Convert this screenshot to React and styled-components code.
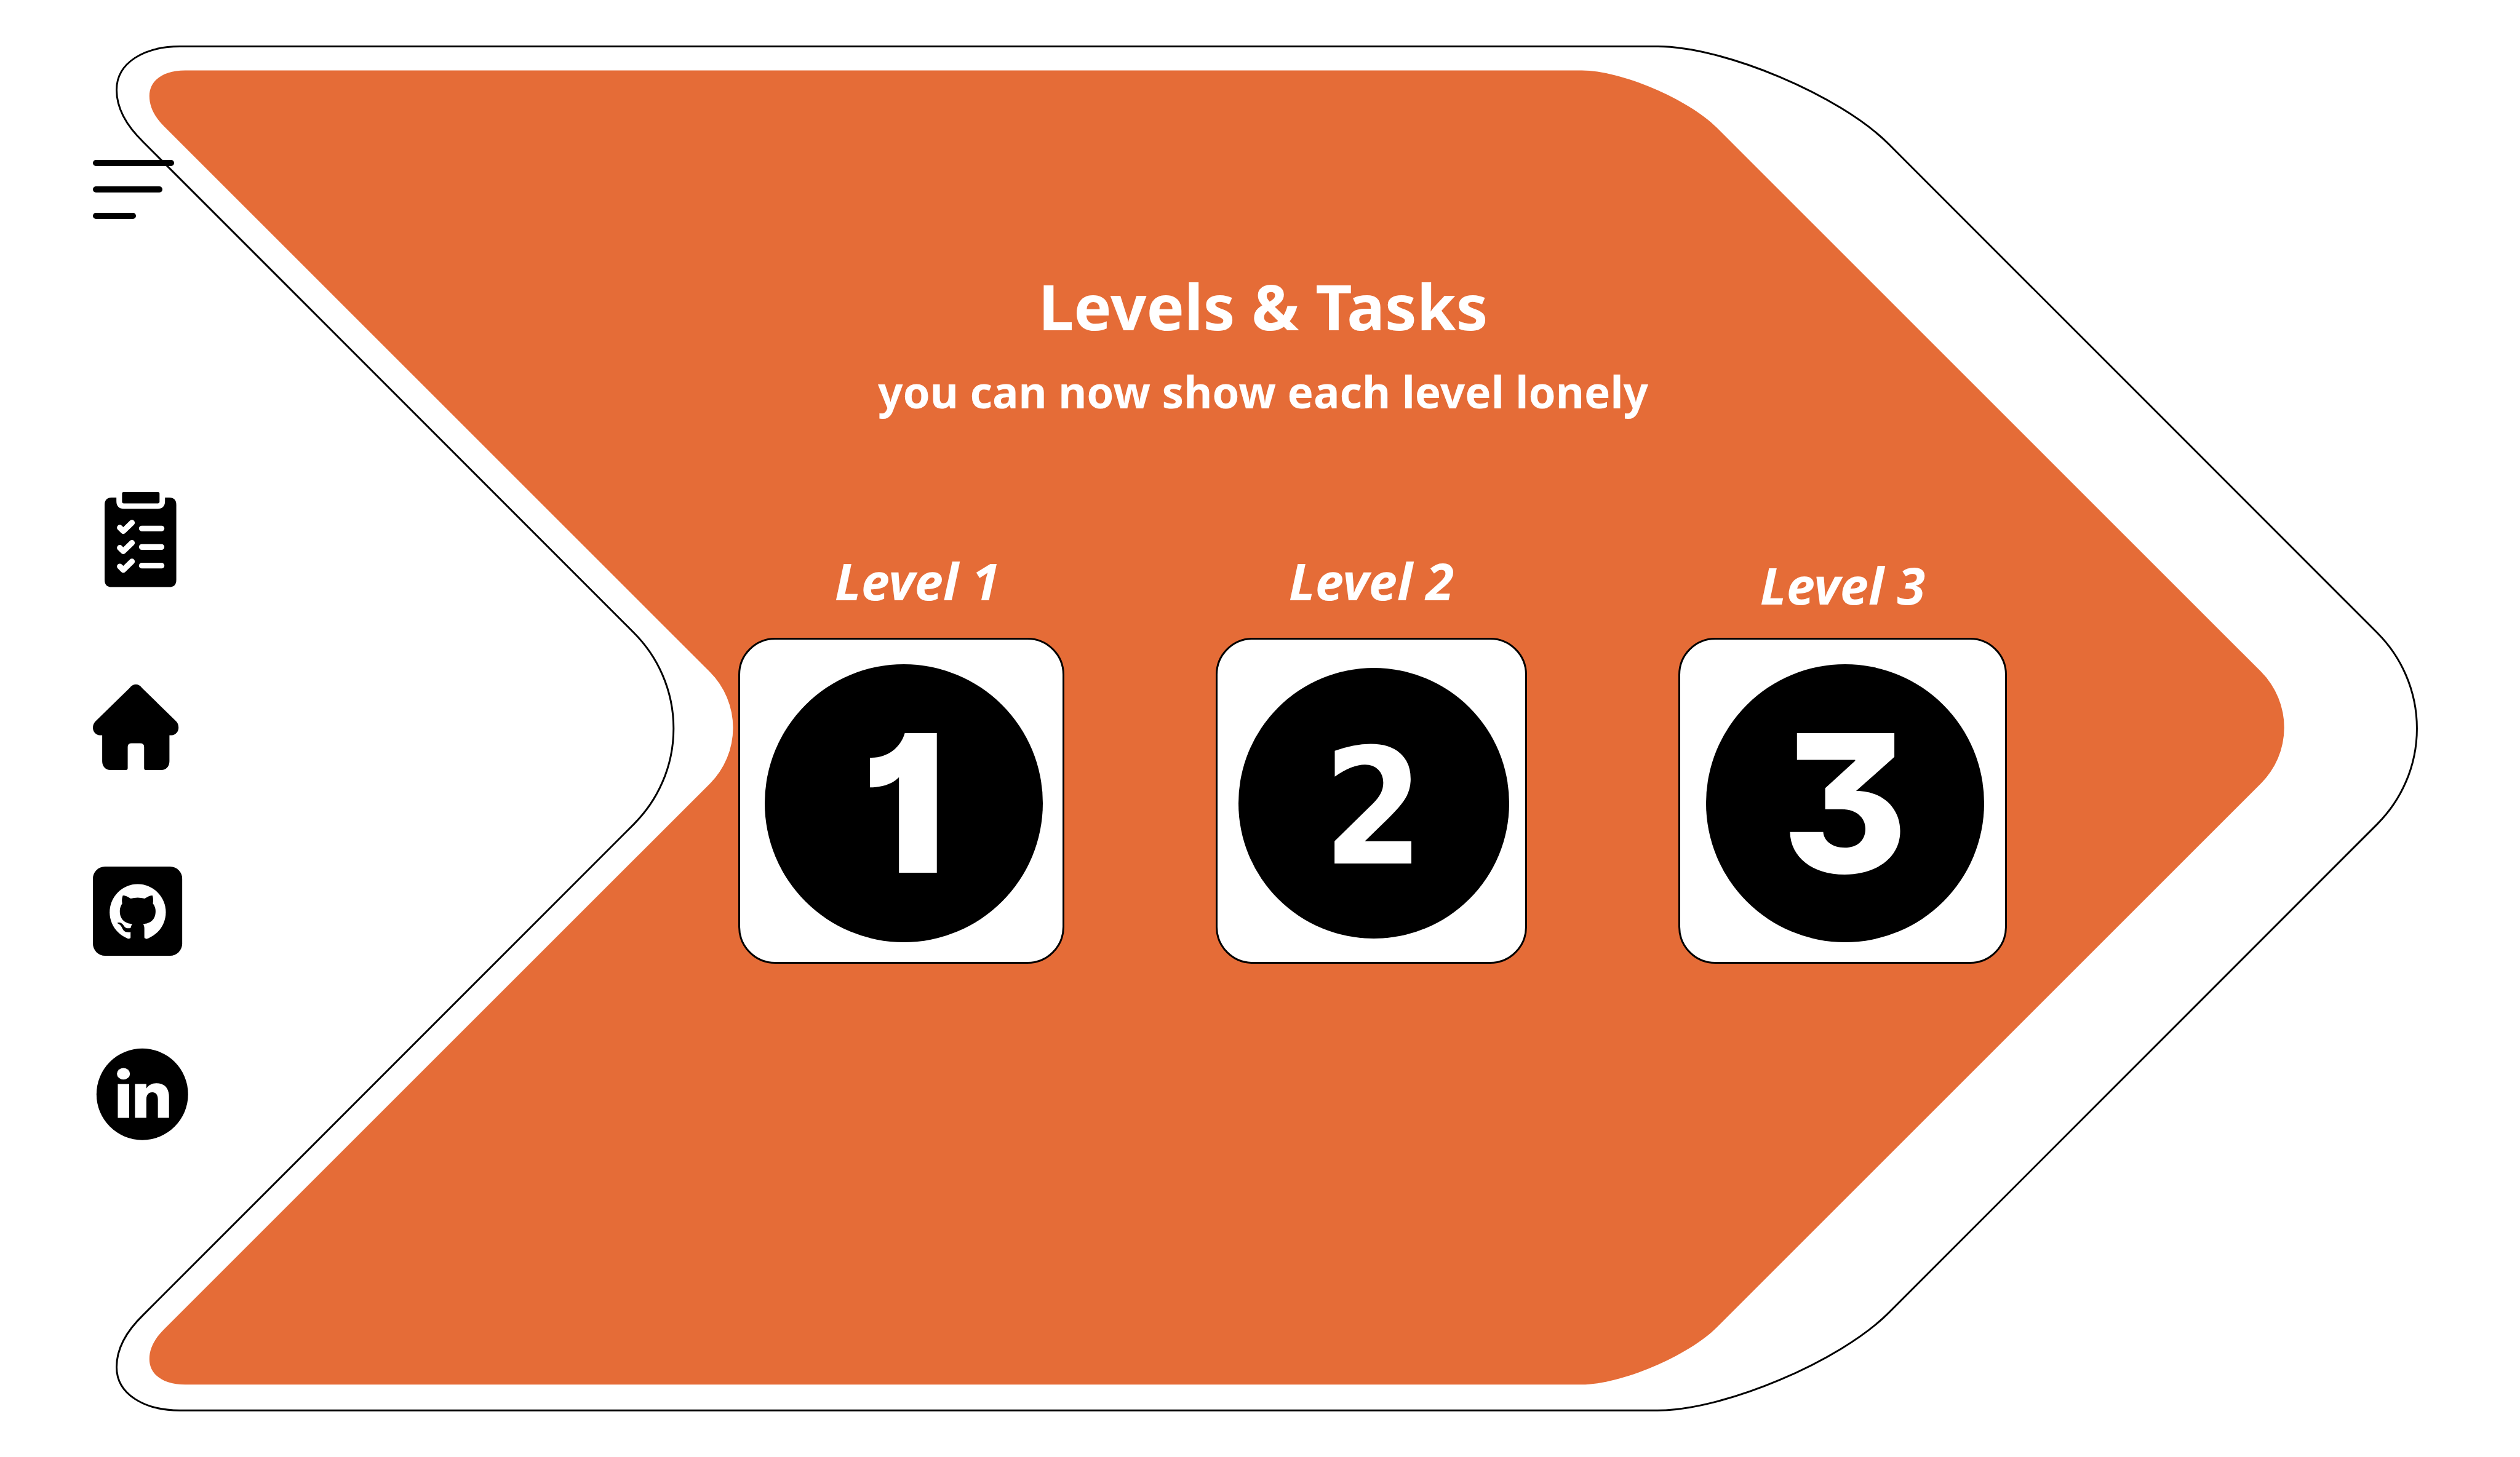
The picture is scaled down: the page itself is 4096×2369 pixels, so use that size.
import React from "react";
import styled, { createGlobalStyle } from "styled-components";

const GlobalStyle = createGlobalStyle`
  *, *::before, *::after { box-sizing: border-box; }
  body {
    margin: 0;
    background: #fff;
    color: #000;
    font-family: "Segoe UI", "Noto Sans", "Open Sans", sans-serif;
  }
`;

const Page = styled.div`
  display: grid;
  grid-template-columns: 100%;
`;

const Backdrop = styled.svg`
  grid-area: 1 / 1;
  display: block;
  width: 100%;
  height: auto;
`;

const Layout = styled.div`
  grid-area: 1 / 1;
  display: grid;
  grid-template-columns: 308px 1fr 298px;
  align-items: start;
`;

const Sidebar = styled.aside`
  display: flex;
  flex-direction: column;
  align-items: flex-start;
  gap: 444px;
  padding: 260px 0 0 151px;
`;

const MenuButton = styled.button`
  display: flex;
  flex-direction: column;
  align-items: flex-start;
  gap: 33px;
  padding: 0;
  border: 0;
  background: none;
  cursor: pointer;
`;

const MenuBar = styled.span`
  width: ${({ $width }) => $width}px;
  height: 10px;
  border-radius: 5px;
  background: #000;
`;

const Nav = styled.nav`
  display: flex;
  flex-direction: column;
  gap: 144px;
`;

const NavLink = styled.a`
  display: block;
  color: #000;
`;

const NavIcon = styled.svg`
  display: block;
  width: 156px;
  height: 156px;
`;

const Main = styled.main`
  display: flex;
  flex-direction: column;
  align-items: center;
  padding-top: 425px;
  color: #fff;
`;

const Title = styled.h1`
  margin: 0;
  font-size: 103px;
  line-height: 144px;
  font-weight: 700;
`;

const Subtitle = styled.p`
  margin: 0;
  font-size: 71px;
  line-height: 136px;
  font-weight: 700;
`;

const Levels = styled.div`
  display: flex;
  align-items: flex-end;
  gap: 246px;
  margin: 185px 0 0 356px;
`;

const Level = styled.section`
  display: flex;
  flex-direction: column;
  align-items: center;
`;

const LevelName = styled.h2`
  margin: 0;
  padding: 0 0 ${({ $gap }) => $gap}px ${({ $indent }) => $indent}px;
  font-size: 83px;
  line-height: 108px;
  font-weight: 700;
  font-style: italic;
`;

const LevelCard = styled.button`
  display: flex;
  align-items: center;
  justify-content: center;
  width: ${({ $width }) => $width}px;
  height: 530px;
  padding: 7px 0 0 7px;
  border: 3px solid #000;
  border-radius: 60px;
  background: #fff;
  cursor: pointer;
`;

const Disc = styled.span`
  display: flex;
  align-items: center;
  justify-content: center;
  width: ${({ $size }) => $size}px;
  height: ${({ $size }) => $size}px;
  padding-top: ${({ $drop }) => $drop}px;
  border-radius: 50%;
  background: #000;
  color: #fff;
  font-family: ${({ $font }) => $font}, sans-serif;
  font-size: ${({ $digit }) => $digit}px;
  line-height: 1;
  font-weight: ${({ $weight }) => $weight};
  font-feature-settings: "cv01", "cv09";
`;

function Arrow() {
  return (
    <Backdrop viewBox="0 0 4150 2400" aria-hidden="true">
      <path
        fill="none"
        stroke="#000"
        strokeWidth="3"
        d="M296 76.5H2730C2839 76.5 3030 157 3110 237L3915 1042.5A222.7 222.7 0 0 1 3915 1357.5L3110 2163C3030 2243 2839 2323.5 2730 2323.5H296C238 2323.5 192 2297 192 2252C192 2224 206 2195 236 2166L1044 1357.5A222.7 222.7 0 0 0 1044 1042.5L236 234C206 205 192 176 192 148C192 103 238 76.5 296 76.5Z"
      />
      <path
        fill="#e56c37"
        d="M305 116H2605C2669 116 2780 163 2827 210L3724 1107A130 130 0 0 1 3723 1291L2827 2187C2780 2234 2669 2281 2605 2281H305C268 2281 246 2264 246 2239C246 2222 254 2206 270 2190L1169 1291A130 130 0 0 0 1169 1107L270 208C254 192 246 175 246 158C246 133 268 116 305 116Z"
      />
    </Backdrop>
  );
}

function TasksIcon() {
  return (
    <NavIcon viewBox="0 0 158 158" aria-hidden="true">
      <path d="M31 9H38.7V15Q38.7 27.6 51 27.6H106.5Q118.7 27.6 118.7 15V9H125.5Q137.3 9 137.3 21V144.6Q137.3 156.6 125.5 156.6H31Q19.3 156.6 19.3 144.6V21Q19.3 9 31 9Z" />
      <rect x="48" y="0" width="61.7" height="18.7" rx="2.5" />
      <g fill="none" stroke="#fff" strokeWidth="9.4" strokeLinecap="round" strokeLinejoin="round">
        <path d="M44.3 58.7L50 64.3L64.3 50.5M80.5 60.1H113" />
        <path d="M44.3 91.9L50 97.5L64.3 83.7M80.5 90.5H113" />
        <path d="M44.3 122.6L50 128.2L64.3 114.4M80.5 121.2H113" />
      </g>
    </NavIcon>
  );
}

function HomeIcon() {
  return (
    <NavIcon viewBox="0 0 158 158" aria-hidden="true">
      <path d="M11.3 96.8C4.5 96.3 0 90.5 0 84.3C0 80 1.5 76.5 4.3 73.6L60.3 18.9C66.5 11 75 11 81 18.9L137 73.6C139.8 76.5 141 80 141 84.3C141 90.5 136.5 96.3 129.7 96.8H126V139.6C126 148 120.5 154 112.7 154H87Q84.3 154 84.3 151V116Q84.3 110 77.7 110H63.7Q57.3 110 57.3 116V151Q57.3 154 54.3 154H28.7C21 154 15.3 148 15.3 139.6V96.8Z" />
    </NavIcon>
  );
}

function GithubIcon() {
  return (
    <NavIcon viewBox="0 0 158 158" aria-hidden="true">
      <rect x="0" y="9" width="147" height="147" rx="20" />
      <circle cx="73.8" cy="84.3" r="46.2" fill="#fff" />
      <path d="M49.3 56.7C52.5 56.6 57.5 58.5 62.3 61.9Q73.7 58.8 85.3 61.9C90 58.5 95 56.6 98 56.7C99.5 61 99.5 66 98.7 69.9C101.8 73.5 103.2 78 103.2 82.4C103.2 97.5 94 102.8 82.7 103.9C84 106 84.7 108 84.7 111V125C84.7 127.5 86 127.7 87.7 127.5V134H59V127.5C61 127.8 62 127.3 62 125.5V117.1C52 118.2 50 114.5 48 110C46.7 106.8 44.5 104.2 41.5 103C39.3 102.2 39.8 101.2 43.7 101.2C47 101.6 49 103.5 51 106.5C53.5 111 58.5 111.5 62.3 109.8Q62.8 106 65 103.9C54 102.8 44.3 97.5 44.3 82.4C44.3 78 45.8 73.5 48.3 69.9C47.3 66 47.8 60.5 49.3 56.7Z" />
    </NavIcon>
  );
}

function LinkedinIcon() {
  return (
    <NavIcon viewBox="0 0 158 158" aria-hidden="true">
      <circle cx="81.3" cy="80.2" r="75.4" />
      <g fill="#fff">
        <ellipse cx="50.3" cy="46.5" rx="10.7" ry="9.5" />
        <rect x="41" y="63.4" width="18.7" height="55.7" />
        <path d="M69.3 63.4H88V70.6C92 65 97.5 62 104.3 62C118 62 125.3 70 125.3 84.5V119.1H107V89C107 81.5 104 77 97.7 77C91.5 77 88 81.5 88 88V119.1H69.3Z" />
      </g>
    </NavIcon>
  );
}

const links = [
  { label: "Tasks", href: "#tasks", Icon: TasksIcon },
  { label: "Home", href: "#home", Icon: HomeIcon },
  { label: "GitHub", href: "#github", Icon: GithubIcon },
  { label: "LinkedIn", href: "#linkedin", Icon: LinkedinIcon },
];

const levels = [
  { n: 1, width: 530, disc: 452, font: "Inter", weight: 900, digit: 312, drop: 0, gap: 39, indent: 52 },
  { n: 2, width: 506, disc: 440, font: '"DejaVu Sans Condensed", "DejaVu Sans"', weight: 700, digit: 262, drop: 16, gap: 39, indent: 0 },
  { n: 3, width: 534, disc: 452, font: "Inter", weight: 800, digit: 312, drop: 0, gap: 32, indent: 0 },
];

export default function App() {
  return (
    <>
      <GlobalStyle />
      <Page>
        <Arrow />
        <Layout>
          <Sidebar>
            <MenuButton type="button" aria-label="Menu">
              <MenuBar $width={132} />
              <MenuBar $width={113} />
              <MenuBar $width={70} />
            </MenuButton>
            <Nav>
              {links.map(({ label, href, Icon }) => (
                <NavLink key={label} href={href} aria-label={label}>
                  <Icon />
                </NavLink>
              ))}
            </Nav>
          </Sidebar>
          <Main>
            <Title>Levels &amp; Tasks</Title>
            <Subtitle>you can now show each level lonely</Subtitle>
            <Levels>
              {levels.map(({ n, width, disc, font, weight, digit, drop, gap, indent }) => (
                <Level key={n}>
                  <LevelName id={`level-${n}`} $gap={gap} $indent={indent}>
                    Level {n}
                  </LevelName>
                  <LevelCard type="button" aria-labelledby={`level-${n}`} $width={width}>
                    <Disc $size={disc} $font={font} $weight={weight} $digit={digit} $drop={drop}>{n}</Disc>
                  </LevelCard>
                </Level>
              ))}
            </Levels>
          </Main>
        </Layout>
      </Page>
    </>
  );
}
